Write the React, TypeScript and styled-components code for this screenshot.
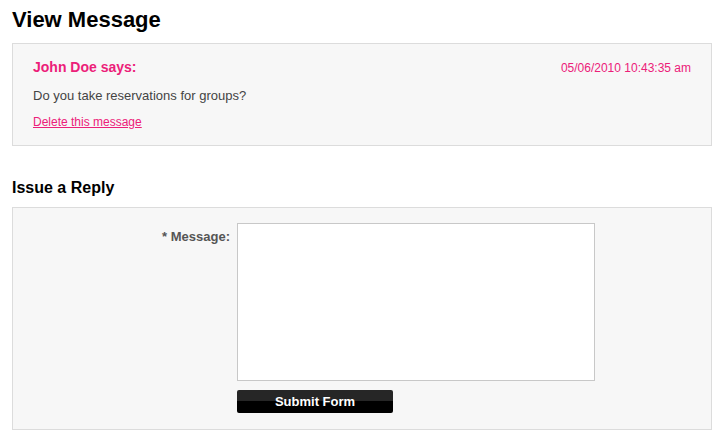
import React from "react";
import styled, { createGlobalStyle } from "styled-components";

const Global = createGlobalStyle`
  html, body { margin: 0; padding: 0; background: #fff; }
  body { font-family: "Liberation Sans", Arial, Helvetica, sans-serif; color: #444; }
`;

const Page = styled.div`
  width: 700px;
  padding: 0 0 0 12px;
`;

const Title = styled.h1`
  margin: 0;
  padding-top: 8px;
  height: 35px;
  font-size: 22px;
  line-height: 24px;
  font-weight: bold;
  color: #000;
`;

const Panel = styled.div<{ $pad: string }>`
  box-sizing: border-box;
  border: 1px solid #dcdcdc;
  background: #f7f7f7;
  padding: ${(p) => p.$pad};
`;

const MessageHead = styled.div`
  display: flex;
  justify-content: space-between;
  align-items: baseline;
`;

const Author = styled.span`
  color: #ec2079;
  font-weight: bold;
  font-size: 14px;
  line-height: 18px;
`;

const Stamp = styled.span`
  color: #ec2079;
  font-size: 12px;
`;

const Body = styled.p`
  margin: 12px 0 0;
  font-size: 13px;
  line-height: 15px;
  color: #444;
`;

const DeleteLink = styled.a`
  display: inline-block;
  margin-top: 12px;
  font-size: 12px;
  line-height: 15px;
  color: #ec2079;
  text-decoration: underline;
`;

const SubTitle = styled.h2`
  margin: 0;
  padding-top: 33px;
  height: 28px;
  font-size: 16px;
  line-height: 18px;
  font-weight: bold;
  color: #000;
`;

const FormGrid = styled.div`
  display: grid;
  grid-template-columns: 217px 358px;
  column-gap: 7px;
  row-gap: 9px;
`;

const Label = styled.label`
  text-align: right;
  font-size: 13px;
  font-weight: bold;
  color: #555;
  padding-top: 6px;
`;

const TextArea = styled.textarea`
  box-sizing: border-box;
  width: 358px;
  height: 158px;
  border: 1px solid #c8c8c8;
  background: #fff;
  resize: none;
  margin: 0;
  display: block;
`;

const SubmitButton = styled.button`
  grid-column: 2;
  width: 156px;
  height: 23px;
  border: none;
  border-radius: 2px;
  background: linear-gradient(#262626 0%, #262626 48%, #000 48%, #000 100%);
  color: #fff;
  font-family: "Liberation Sans", Arial, sans-serif;
  font-size: 13px;
  font-weight: bold;
  padding: 0;
  cursor: pointer;
`;

export default function App() {
  return (
    <>
      <Global />
      <Page>
        <Title>View Message</Title>
        <Panel $pad="14px 20px 15px 20px">
          <MessageHead>
            <Author>John Doe says:</Author>
            <Stamp>05/06/2010 10:43:35 am</Stamp>
          </MessageHead>
          <Body>Do you take reservations for groups?</Body>
          <DeleteLink href="#">Delete this message</DeleteLink>
        </Panel>
        <SubTitle>Issue a Reply</SubTitle>
        <Panel $pad="15px 0 16px 0">
          <FormGrid>
            <Label>* Message:</Label>
            <TextArea />
            <SubmitButton>Submit Form</SubmitButton>
          </FormGrid>
        </Panel>
      </Page>
    </>
  );
}
